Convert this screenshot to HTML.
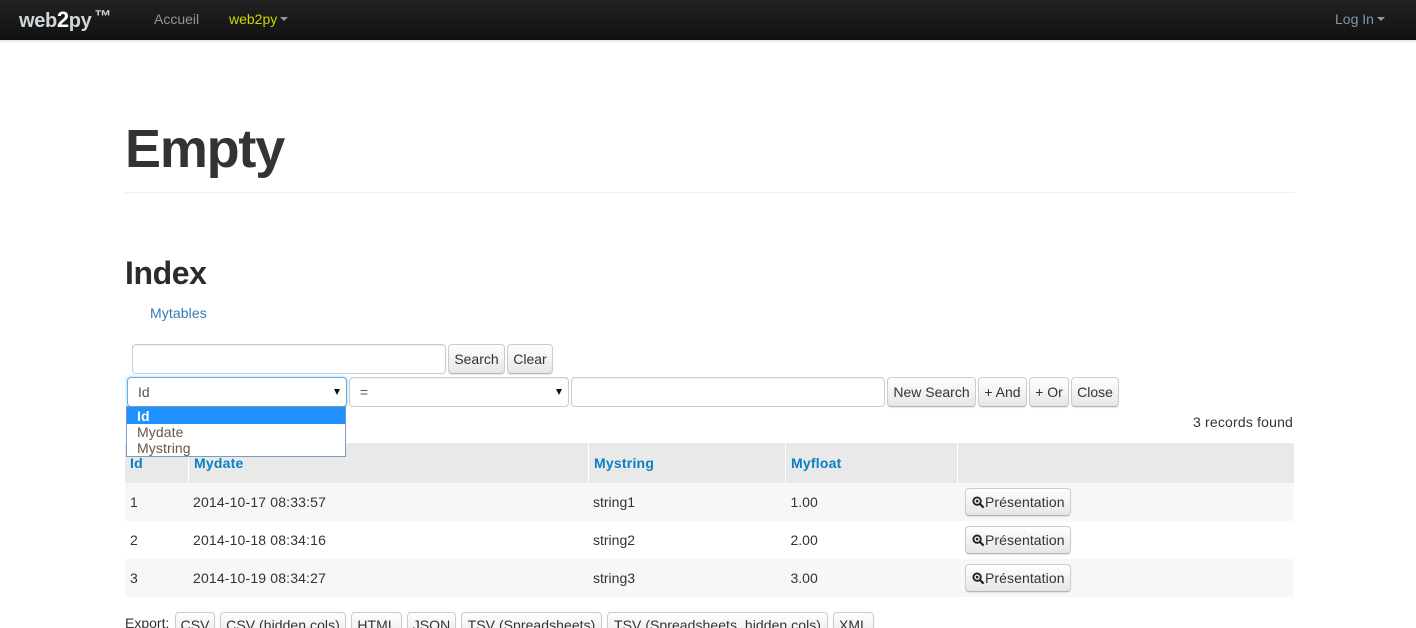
<!DOCTYPE html>
<html><head><meta charset="utf-8"><title>Empty</title>
<style>
html,body{margin:0;padding:0;background:#fff;width:1416px;height:628px;overflow:hidden}
#w{position:relative;width:1416px;height:628px;overflow:hidden;font:14px/20px "Liberation Sans",sans-serif;color:#333;background:#fff}
.a{position:absolute;white-space:nowrap}
.nav{left:0;top:0;width:1416px;height:40px;background:linear-gradient(#222,#111);box-shadow:0 1px 3px rgba(0,0,0,.15)}
.caret{position:absolute;width:0;height:0;border-left:4px solid transparent;border-right:4px solid transparent;border-top:4px solid #999}
.btn{position:absolute;box-sizing:border-box;height:30px;border:1px solid #ccc;border-bottom-color:#b5b5b5;border-radius:4px;background:linear-gradient(#fff,#e6e6e6);box-shadow:0 1px 1px rgba(0,0,0,.1);text-align:center;line-height:29px;color:#333;white-space:nowrap}
.ex{line-height:25px;letter-spacing:.05px}
.pr{left:965px;width:106px;height:28px;line-height:27px;padding-left:19px;text-align:left;letter-spacing:.08px}
.pr svg{position:absolute;left:6px;top:7px}
.inp{position:absolute;box-sizing:border-box;height:30px;border:1px solid #ccc;border-radius:4px;background:#fff;box-shadow:inset 0 1px 1px rgba(0,0,0,.075)}
.arrow{position:absolute;width:0;height:0;border-left:3.5px solid transparent;border-right:3.5px solid transparent;border-top:6px solid #111}
.hd{position:absolute;top:443px;height:40px;background:#e9e9e9;font-weight:bold;color:#0a7fc4;line-height:40px;box-sizing:border-box;letter-spacing:.22px}
.row{position:absolute;left:125px;width:1169px;height:38px}
.c{position:absolute;line-height:38px;white-space:nowrap;top:0}
.d{letter-spacing:.16px}
</style></head><body>
<div id="w">
<div class="a nav"></div>
<div class="a" style="left:19px;top:9px;font-size:20px;font-weight:bold;color:#cfd6da;line-height:22px;letter-spacing:-.35px">web<span style="color:#fff;font-size:22px">2</span>py<span style="position:relative;top:-5px;font-size:17px;margin-left:3px;letter-spacing:0">™</span></div>
<div class="a" style="left:154px;top:9px;color:#8f959b">Accueil</div>
<div class="a" style="left:229px;top:9px;color:#c9d900">web2py</div>
<div class="caret" style="left:280px;top:17px"></div>
<div class="a" style="left:1335px;top:9px;color:#7f97a8">Log In</div>
<div class="caret" style="left:1377px;top:17px"></div>

<div class="a" style="left:125px;top:118px;font-size:54px;line-height:62px;font-weight:bold;color:#333;letter-spacing:-1.2px">Empty</div>
<div class="a" style="left:125px;top:192px;width:1170px;height:1px;background:#eee"></div>
<div class="a" style="left:125px;top:254px;font-size:32px;line-height:38px;font-weight:bold;color:#2b2b2b;letter-spacing:-.4px">Index</div>
<div class="a" style="left:150px;top:303px;color:#337ab7;letter-spacing:.1px">Mytables</div>

<div class="inp" style="left:132px;top:344px;width:314px"></div>
<div class="btn" style="left:448px;top:344px;width:57px">Search</div>
<div class="btn" style="left:507px;top:344px;width:46px">Clear</div>

<div class="inp" style="left:127px;top:377px;width:220px;border-color:#66afe9;box-shadow:0 0 3px rgba(102,175,233,.7)"></div>
<div class="a" style="left:138px;top:382px;color:#555">Id</div>
<div class="arrow" style="left:334px;top:389px"></div>
<div class="inp" style="left:349px;top:377px;width:220px"></div>
<div class="a" style="left:360px;top:382px;color:#555">=</div>
<div class="arrow" style="left:556px;top:389px"></div>
<div class="inp" style="left:571px;top:377px;width:314px"></div>
<div class="btn" style="left:887px;top:377px;width:89px">New Search</div>
<div class="btn" style="left:978px;top:377px;width:49px">+ And</div>
<div class="btn" style="left:1029px;top:377px;width:40px">+ Or</div>
<div class="btn" style="left:1071px;top:377px;width:48px">Close</div>

<div class="a" style="right:123px;top:412px;letter-spacing:.18px">3 records found</div>

<div class="hd" style="left:125px;width:63px;padding-left:5px">Id</div>
<div class="hd" style="left:189px;width:399px;padding-left:5px">Mydate</div>
<div class="hd" style="left:589px;width:196px;padding-left:5px">Mystring</div>
<div class="hd" style="left:786px;width:171px;padding-left:5px">Myfloat</div>
<div class="hd" style="left:958px;width:336px"></div>

<div class="row" style="top:483px;background:#f7f7f7">
<div class="c" style="left:5px">1</div><div class="c d" style="left:68px">2014-10-17 08:33:57</div><div class="c" style="left:468px">string1</div><div class="c" style="left:665.5px">1.00</div>
</div>
<div class="row" style="top:521px">
<div class="c" style="left:5px">2</div><div class="c d" style="left:68px">2014-10-18 08:34:16</div><div class="c" style="left:468px">string2</div><div class="c" style="left:665.5px">2.00</div>
</div>
<div class="row" style="top:559px;background:#f7f7f7">
<div class="c" style="left:5px">3</div><div class="c d" style="left:68px">2014-10-19 08:34:27</div><div class="c" style="left:468px">string3</div><div class="c" style="left:665.5px">3.00</div>
</div>

<div class="btn pr" style="top:488px">Présentation<svg width="13" height="13" viewBox="0 0 14 14"><circle cx="5.5" cy="5.5" r="4" fill="none" stroke="#222" stroke-width="2"/><circle cx="5.5" cy="5.5" r="1.4" fill="#222"/><path d="M8.5 8.5L12.5 12.5" stroke="#222" stroke-width="2.4"/></svg></div>
<div class="btn pr" style="top:526px">Présentation<svg width="13" height="13" viewBox="0 0 14 14"><circle cx="5.5" cy="5.5" r="4" fill="none" stroke="#222" stroke-width="2"/><circle cx="5.5" cy="5.5" r="1.4" fill="#222"/><path d="M8.5 8.5L12.5 12.5" stroke="#222" stroke-width="2.4"/></svg></div>
<div class="btn pr" style="top:564px">Présentation<svg width="13" height="13" viewBox="0 0 14 14"><circle cx="5.5" cy="5.5" r="4" fill="none" stroke="#222" stroke-width="2"/><circle cx="5.5" cy="5.5" r="1.4" fill="#222"/><path d="M8.5 8.5L12.5 12.5" stroke="#222" stroke-width="2.4"/></svg></div>

<div class="a" style="left:126px;top:406px;box-sizing:border-box;width:220px;height:51px;border:1px solid #7a9cc0;background:#fff;line-height:16px;letter-spacing:.1px">
<div style="background:#1e90ff;color:#fff;font-weight:bold;height:17px;line-height:19px;padding-left:10px">Id</div>
<div style="padding-left:10px;color:#6b5548">Mydate</div>
<div style="padding-left:10px;color:#6b5548">Mystring</div>
</div>

<div class="a" style="left:125px;top:613px">Export:</div>
<div class="btn ex" style="left:175px;top:612px;width:40px">CSV</div>
<div class="btn ex" style="left:220px;top:612px;width:126px">CSV (hidden cols)</div>
<div class="btn ex" style="left:351px;top:612px;width:51px">HTML</div>
<div class="btn ex" style="left:407px;top:612px;width:49px">JSON</div>
<div class="btn ex" style="left:461px;top:612px;width:141px">TSV (Spreadsheets)</div>
<div class="btn ex" style="left:607px;top:612px;width:221px">TSV (Spreadsheets, hidden cols)</div>
<div class="btn ex" style="left:833px;top:612px;width:41px">XML</div>
</div>
</body></html>
